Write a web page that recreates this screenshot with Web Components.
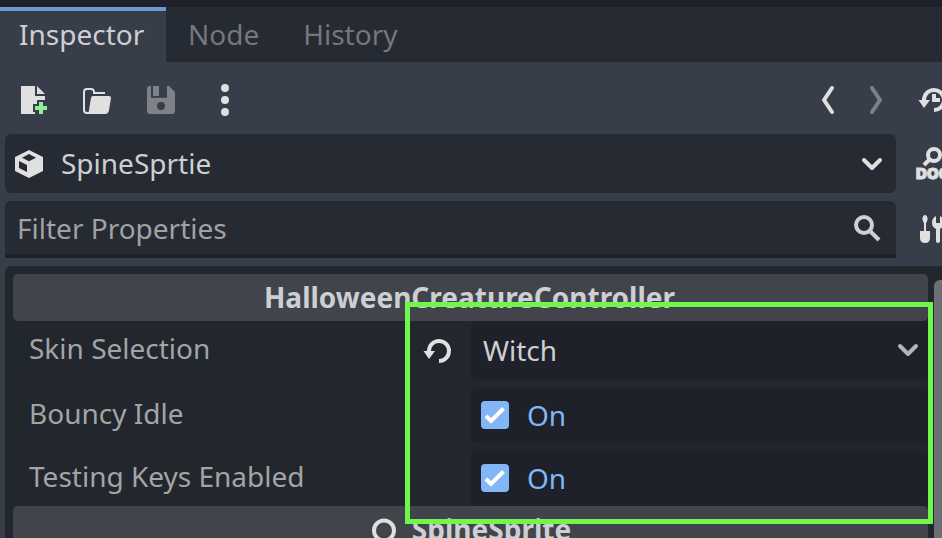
<!DOCTYPE html>
<html lang="en"><head><meta charset="utf-8"><title>Inspector</title>
<style>
html,body{margin:0;height:100%;overflow:hidden;background:#383d4a}
body{font:28px/38px "Noto Sans",sans-serif;color:#cdcfd2}
</style></head><body>
<inspector-dock></inspector-dock>
<script>
const define=(name,html)=>customElements.define(name,class extends HTMLElement{
  constructor(){super();this.attachShadow({mode:'open'}).innerHTML=html;}
});

const icons={
  newfile:[32,32,'<path fill="#e0e0e0" d="M2 2h14v10h10v4h-8v4h-4v8h2v2H2z"/><path fill="#e0e0e0" d="M18 2v8h8z"/><path fill="#8eef97" d="M20 18h4v4h4v4h-4v4h-4v-4h-4v-4h4z"/>'],
  folder:[32,32,'<path fill="none" stroke="#e0e0e0" stroke-width="2" d="M8 29H6q-3 0-3-3V8q0-3 3-3h4q3 0 3 3v1h10v1"/><path fill="#e0e0e0" d="M12 12h16q2 0 2 2l-2 12q-.5 4-4 4H6q2-1 2-4l2-12q.3-2 2-2z"/>'],
  save:[32,32,'<path fill="#7e8188" fill-rule="evenodd" d="M5 2H6V13.700H22V2h2l6 6v19q0 3-3 3H5q-3 0-3-3V5q0-3 3-3zM16 18a4 4 0 1 0 0 8a4 4 0 1 0 0-8z"/><path fill="#7e8188" d="M8 2h6v10H8z"/>'],
  dots:[32,32,'<g fill="#e0e0e0"><circle cx="16" cy="4" r="4"/><circle cx="16" cy="16" r="4"/><circle cx="16" cy="28" r="4"/></g>'],
  back:[16,32,'<path d="M12 4 4 16l8 12" fill="none" stroke="#e0e0e0" stroke-width="4" stroke-linecap="round" stroke-linejoin="round"/>'],
  forward:[16,32,'<path d="m4 4 8 12-8 12" fill="none" stroke="#7e8188" stroke-width="4" stroke-linecap="round" stroke-linejoin="round"/>'],
  history:[32,32,'<path d="M8 18v-2a10 10 0 1 1 10 10" fill="none" stroke="#e0e0e0" stroke-width="4"/><path fill="#e0e0e0" d="M2.500 16H14L8 24zM16 10h4v4h4v4h-8z"/>'],
  undo:[32,32,'<path d="M8 18v-2a10 10 0 1 1 10 10" fill="none" stroke="#e0e0e0" stroke-width="4"/><path fill="#e0e0e0" d="M2.500 16H14L8 24z"/>'],
  cube:[32,32,'<path fill="#e0e0e0" fill-rule="evenodd" d="M16 2 30 9v14l-14 7-14-7V9zM16 6 9 9.800l7 3.400 7-3.400zM6 13v7l8 4v-7z"/>'],
  down:[32,32,'<path d="m8 12 8 8 8-8" fill="none" stroke="currentColor" stroke-width="4" stroke-linecap="round" stroke-linejoin="round"/>'],
  search:[32,32,'<circle cx="12" cy="13" r="8" fill="none" stroke="#cdcfd2" stroke-width="4"/><path d="m18 19 9 9" stroke="#cdcfd2" stroke-width="4"/>'],
  doc:[32,34,'<circle cx="20" cy="10" r="6" fill="none" stroke="#e0e0e0" stroke-width="4"/><path d="m16 14-6 6" stroke="#e0e0e0" stroke-width="4"/><text x="2" y="33.500" font-family="Inter,sans-serif" font-weight="900" font-size="15" fill="#e0e0e0" stroke="#e0e0e0" textLength="34">DOC</text>'],
  tools:[32,32,'<path fill="#e0e0e0" d="M11 2q2 0 2.700 4-.7 3-1.700 4v8h4v7q0 5-5 5t-5-5v-7h4v-8Q9 9 8.300 6 9 2 11 2z"/><path fill="#e0e0e0" d="M22 3v7h4V3q4 2 4 6.500t-4 6.500v12q0 2-2 2t-2-2V16q-4-2-4-6.500T22 3z"/>'],
  ring:[32,32,'<circle cx="16" cy="16.500" r="10" fill="none" stroke="#e0e0e0" stroke-width="4"/>'],
  check:[28,28,'<rect width="28" height="28" rx="4" fill="#82b6f6"/><path d="m5 15 5 5L22.500 7.500" fill="none" stroke="#fff" stroke-width="4"/>']
};
customElements.define('ui-icon',class extends HTMLElement{
  connectedCallback(){
    const [w,h,body]=icons[this.getAttribute('name')];
    this.attachShadow({mode:'open'}).innerHTML=`<style>:host{display:block;flex:none;width:${w}px;height:${h}px}svg{display:block;overflow:visible}</style><svg width="${w}" height="${h}" viewBox="0 0 ${w} ${h}">${body}</svg>`;
  }
});
define('dock-tab',`<style>:host{display:block;box-sizing:border-box;height:55px;padding:8px 22px 0 22px;color:#75777b;white-space:nowrap}:host([active]){width:166px;background:#383d4a;color:#cdcfd2;border-top:4px solid #699ad0;padding:4px 0 0 19px}</style><slot></slot>`);
define('tab-strip',`<style>:host{display:flex;background:#262a32;border-top:7px solid #1e2129}</style><slot></slot>`);
define('dock-toolbar',`<style>:host{display:flex;align-items:center;height:72px;padding:4px 0 0 19px;gap:32px;box-sizing:border-box}</style><slot></slot>`);
define('object-picker',`<style>:host{display:flex;align-items:center;height:59px;box-sizing:border-box;padding:0 8px;border-radius:6px;background:#262a32}span{flex:1;padding:0 0 2px 16px}</style><ui-icon name="cube"></ui-icon><span><slot></slot></span><ui-icon name="down" style="color:#e0e0e0"></ui-icon>`);
define('filter-field',`<style>:host{display:flex;align-items:center;height:57px;box-sizing:border-box;padding:0 12px;border-radius:6px 6px 0 0;background:#262a32;border-bottom:4px solid #1e2129;color:#a0a2a4}span{flex:1}</style><span><slot></slot></span><ui-icon name="search"></ui-icon>`);
define('section-header',`<style>:host{display:flex;justify-content:center;align-items:center;gap:12px;height:47px;box-sizing:border-box;padding-right:2px;border-radius:5px;background:#42444c;font-weight:700}span{padding-bottom:1px}</style><slot name="icon"></slot><span><slot></slot></span>`);
define('property-row',`<style>:host{display:grid;grid-template-columns:392px 66px 457px}label{padding:var(--label-pad,6px) 0 0 16px;color:#a2a4a5;white-space:nowrap}.reset{padding:13.5px 0 0 16px}</style><label><slot name="label"></slot></label><div class="reset"><slot name="reset"></slot></div><slot></slot>`);
define('enum-value',`<style>:host{display:flex;box-sizing:border-box;height:59px;align-items:center;padding:0 4px 2px 12px;border-radius:5px;background:#1e2129}span{flex:1}</style><span><slot></slot></span><ui-icon name="down" style="color:#b4b5b7"></ui-icon>`);
define('bool-value',`<style>:host{display:flex;box-sizing:border-box;height:55px;align-items:center;gap:18px;padding:0 10px 1px;border-radius:5px;background:#1e2129;color:#82b6f6}</style><ui-icon name="check"></ui-icon><span><slot></slot></span>`);
define('highlight-frame',`<style>:host{position:absolute;left:405px;top:302px;width:528px;height:222px;box-sizing:border-box;border:5px solid #71f74a}</style>`);
define('inspector-dock',`<style>
:host{display:block;position:relative;width:942px;height:538px;overflow:hidden;background:#383d4a}
.fields{display:grid;grid-template-columns:891px 32px;column-gap:18px;row-gap:8px;padding-left:5px}
.side{padding-top:11px}.side.b{padding-top:12px}
.panel{display:flex;margin:8px 0 0 5px;height:280px;background:#22262d;border-radius:6px 0 0 0;padding:8px 0 0 8px;box-sizing:border-box}
.list{width:915px;flex:none;display:flex;flex-direction:column}
.bar{margin:6px 0 0 6px;width:16px;flex:none;background:#6c6f74;border-radius:6px 6px 0 0}
.sp{flex:1}.list>*{flex:none}
.gap{margin-bottom:8px}
.nav{display:flex;gap:32px}
</style>
<tab-strip><dock-tab active>Inspector</dock-tab><dock-tab>Node</dock-tab><dock-tab>History</dock-tab></tab-strip>
<dock-toolbar><ui-icon name="newfile" style="margin-right:-2px"></ui-icon><ui-icon name="folder"></ui-icon><ui-icon name="save"></ui-icon><ui-icon name="dots"></ui-icon><div class="sp"></div><div class="nav"><ui-icon name="back"></ui-icon><ui-icon name="forward"></ui-icon></div><ui-icon name="history" style="margin-right:-6px"></ui-icon></dock-toolbar>
<div class="fields"><object-picker>SpineSprtie</object-picker><div class="side"><ui-icon name="doc"></ui-icon></div><filter-field>Filter Properties</filter-field><div class="side b"><ui-icon name="tools"></ui-icon></div></div>
<div class="panel"><div class="list">
<section-header>HalloweenCreatureController</section-header>
<property-row class="gap" style="--label-pad:8px"><span slot="label">Skin Selection</span><ui-icon slot="reset" name="undo"></ui-icon><enum-value>Witch</enum-value></property-row>
<property-row class="gap"><span slot="label">Bouncy Idle</span><bool-value>On</bool-value></property-row>
<property-row><span slot="label">Testing Keys Enabled</span><bool-value>On</bool-value></property-row>
<section-header><ui-icon slot="icon" name="ring"></ui-icon>SpineSprite</section-header>
</div><div class="bar"></div></div>
<highlight-frame></highlight-frame>`);
</script></body></html>
